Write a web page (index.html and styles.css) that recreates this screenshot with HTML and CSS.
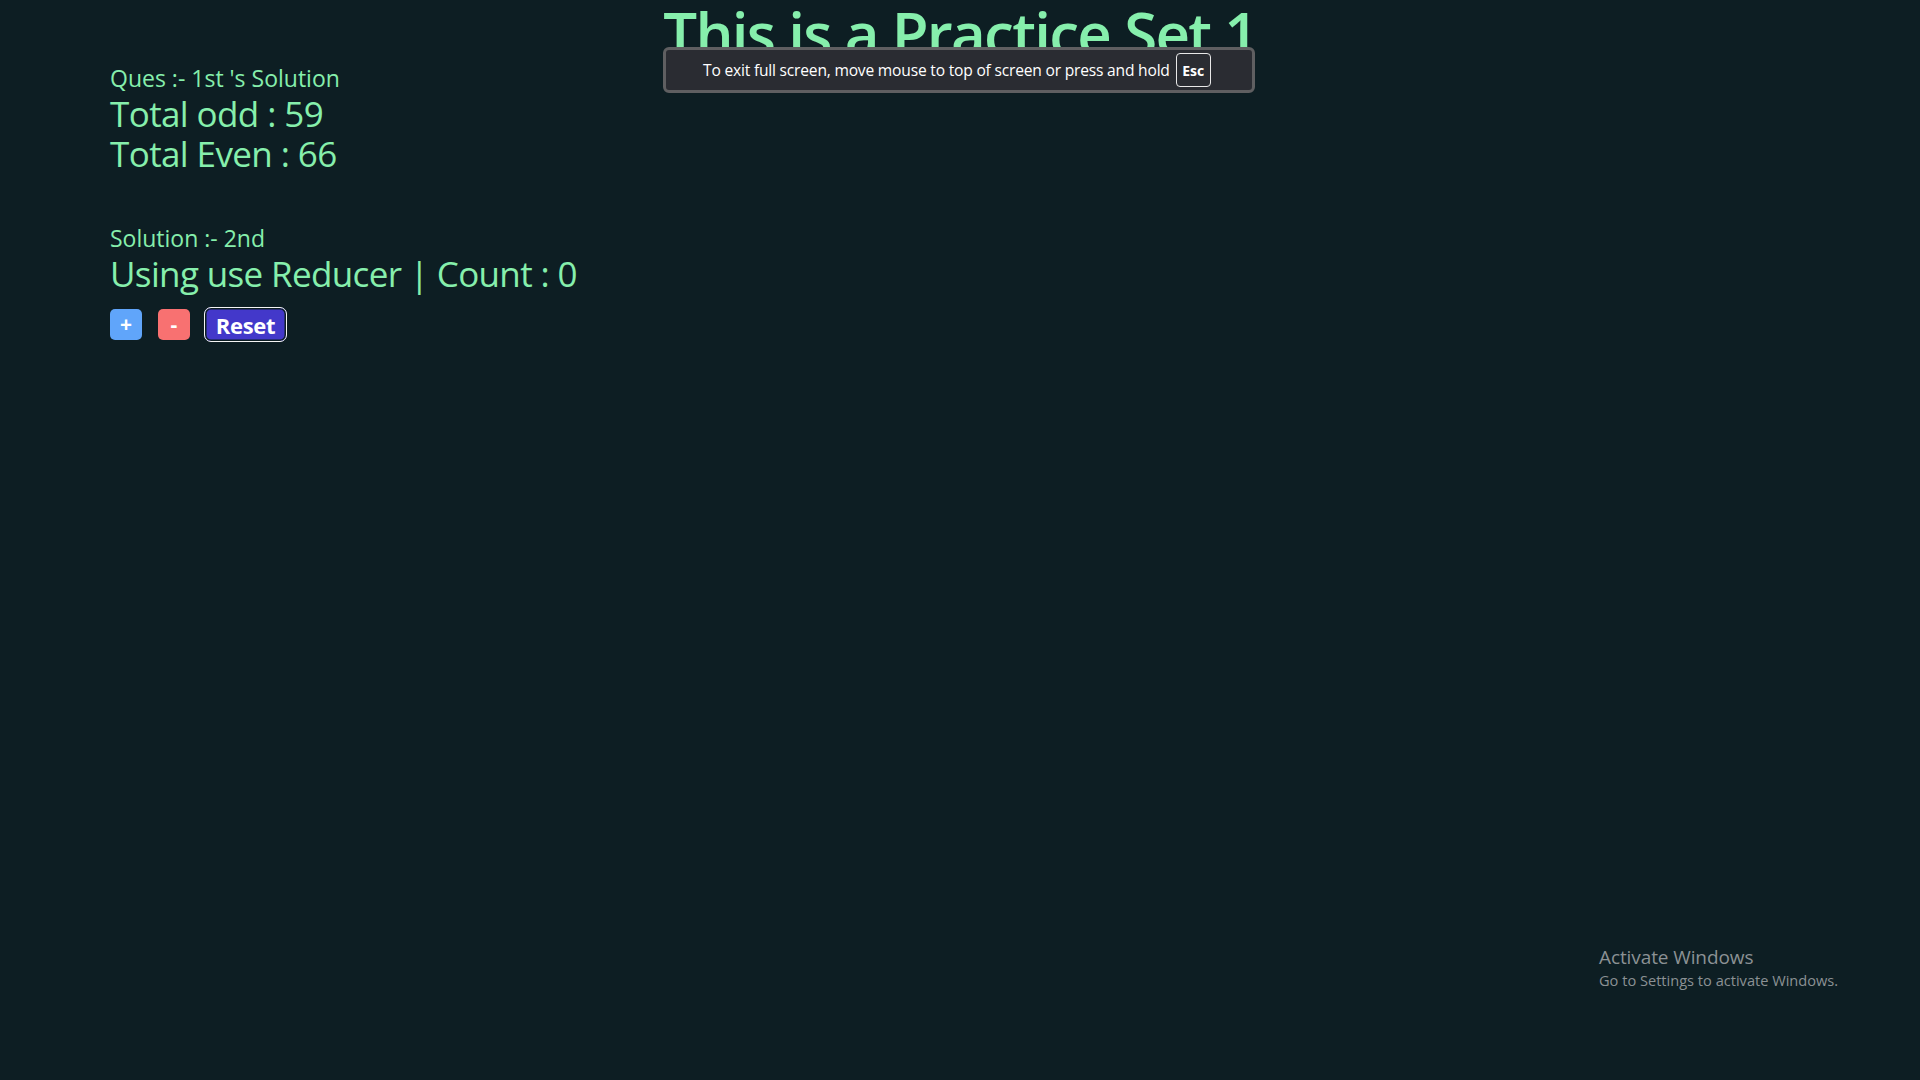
FILE: index.html
```html
<!DOCTYPE html>
<html lang="en">
<head>
<meta charset="utf-8">
<title>Practice Set</title>
<link rel="stylesheet" href="styles.css">
</head>
<body>
<div class="app">
  <h1 class="title">This is a Practice Set 1</h1>
  <section class="sec sec-first">
    <p class="label">Ques :- 1st 's Solution</p>
    <p class="big">Total odd : 59</p>
    <p class="big">Total Even : 66</p>
  </section>
  <section class="sec sec-second">
    <p class="label">Solution :- 2nd</p>
    <p class="big">Using use Reducer | Count : 0</p>
    <div class="buttons">
      <button class="btn btn-plus">+</button>
      <button class="btn btn-minus">-</button>
      <button class="btn btn-reset">Reset</button>
    </div>
  </section>
</div>
<div class="fs-toast">
  <span class="fs-text">To exit full screen, move mouse to top of screen or press and hold</span>
  <span class="fs-key">Esc</span>
</div>
<div class="watermark">
  <div class="wm-title">Activate Windows</div>
  <div class="wm-sub">Go to Settings to activate Windows.</div>
</div>
</body>
</html>
```

FILE: styles.css
```css
html, body {
  margin: 0;
  padding: 0;
  background: #0d1e23;
  height: 100%;
}
body {
  font-family: "Open Sans", "Noto Sans", sans-serif;
  color: #86efac;
  overflow: hidden;
}
.app {
  display: flex;
  flex-direction: column;
}
.title {
  margin: 0;
  padding-top: 3px;
  font-size: 60px;
  line-height: 60px;
  font-weight: 600;
  text-align: center;
  letter-spacing: -1.7px;
}
.sec {
  padding: 0 110px;
}
.sec p {
  margin: 0;
}
.sec-first {
  margin-top: -1px;
}
.sec-second {
  margin-top: 48px;
}
.label {
  font-size: 23px;
  line-height: 32px;
  letter-spacing: 0;
}
.big {
  font-size: 35px;
  line-height: 40px;
  letter-spacing: -0.6px;
}
.sec-second .big {
  margin-top: 0;
  font-size: 35px;
  letter-spacing: -0.65px;
}
.buttons {
  display: flex;
  align-items: center;
  gap: 16px;
  margin-top: 13px;
}
.btn {
  border: none;
  font-family: "Open Sans", sans-serif;
  font-weight: 700;
  color: #fff;
  padding: 0;
  display: flex;
  align-items: center;
  justify-content: center;
}
.btn-plus, .btn-minus {
  width: 32px;
  height: 31px;
  border-radius: 5px;
  font-size: 21px;
  line-height: 1;
}
.btn-plus {
  background: #60a5fa;
}
.btn-minus {
  background: #f87171;
}
.btn-reset {
  width: 83px;
  height: 35px;
  border-radius: 7px;
  background: #4338ca;
  border: 1.5px solid #f4f4f4;
  box-shadow: inset 0 0 0 1.5px #0d1e23;
  font-size: 22px;
  letter-spacing: -0.3px;
  margin-left: -2px;
}
.fs-toast {
  position: absolute;
  left: 663px;
  top: 47px;
  width: 592px;
  height: 46px;
  box-sizing: border-box;
  background: #2a2c32;
  border: 3px solid #5f5f61;
  border-radius: 6px;
  display: flex;
  align-items: center;
  padding-left: 37px;
  gap: 6px;
  font-family: "Open Sans", "Liberation Sans", sans-serif;
  color: #fff;
}
.fs-text {
  font-size: 15.6px;
  letter-spacing: -0.2px;
}
.fs-key {
  width: 35px;
  height: 34px;
  box-sizing: border-box;
  border: 1.5px solid #e8e8e8;
  border-radius: 4px;
  font-size: 14px;
  font-weight: 700;
  display: flex;
  align-items: center;
  justify-content: center;
}
.watermark {
  position: absolute;
  left: 1599px;
  top: 945px;
  color: #8b9194;
  font-family: "Open Sans", "Noto Sans", sans-serif;
}
.wm-title {
  font-size: 19px;
  line-height: 24px;
  letter-spacing: -0.1px;
}
.wm-sub {
  font-size: 14.6px;
  line-height: 22px;
  letter-spacing: 0;
}
```
